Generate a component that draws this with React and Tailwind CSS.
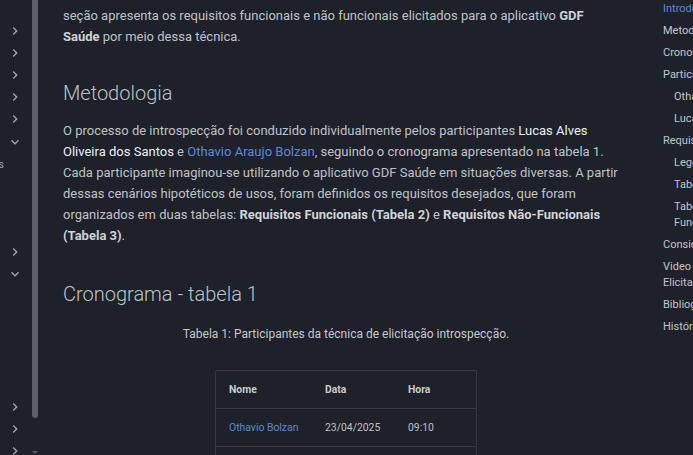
import React from 'react'

// left nav rows: c = chevron ('r' right, 'd' down), t = clipped label, mt = extra offset
const navRows = [
  {}, { c: 'r' }, { c: 'r' }, { c: 'r' }, { c: 'r' }, { c: 'r' },
  { c: 'd', mt: 1 }, { t: 'Requisitos' }, {}, {}, {},
  { c: 'r' }, { c: 'd' }, {}, {}, {}, {}, {},
  { c: 'r', mt: 1 }, { c: 'r' }, { c: 'r' },
]

const tocItems = [
  { lines: ['Introdução'], active: true },
  { lines: ['Metodologia'] },
  { lines: ['Cronograma - tabela 1'] },
  { lines: ['Participantes'] },
  { lines: ['Othavio Araujo Bolzan'], sub: true },
  { lines: ['Lucas Alves Oliveira dos Santos'], sub: true },
  { lines: ['Requisitos'] },
  { lines: ['Legenda'], sub: true },
  { lines: ['Tabela 2: Requisitos Funcionais'], sub: true },
  { lines: ['Tabela 3: Requisitos Não-', 'Funcionais'], sub: true },
  { lines: ['Considerações'] },
  { lines: ['Video de', 'Elicitação'] },
  { lines: ['Bibliografia'] },
  { lines: ['Histórico de versões'] },
]

const rows = [
  { nome: 'Othavio Bolzan', data: '23/04/2025', hora: '09:10' },
  { nome: 'Lucas Alves', data: '23/04/2025', hora: '10:30' },
]

function Chevron({ down }) {
  return (
    <svg viewBox="0 0 24 24" className={`w-4 h-4 fill-[#a3a5ab] ${down ? 'rotate-90' : ''}`}>
      <path d="M8.59 16.58 13.17 12 8.59 7.41 10 6l6 6-6 6z" />
    </svg>
  )
}

function Sidebar() {
  return (
    <aside className="w-[40px] shrink-0 flex">
      <div className="w-[32px] shrink-0 overflow-hidden -mt-[2px]">
        {navRows.map((r, i) => (
          <div
            key={i}
            className={`h-[22px] flex items-center ${r.t ? 'justify-end w-[4px] overflow-hidden' : 'pl-[7px]'} ${r.mt ? 'mt-[1px]' : ''}`}
          >
            {r.c && <Chevron down={r.c === 'd'} />}
            {r.t && <span className="whitespace-nowrap text-[11px] text-[#a3a5ab] pt-[3px]">{r.t}</span>}
          </div>
        ))}
      </div>
      <div className="w-[6px] shrink-0 flex flex-col">
        <div className="h-[418px] bg-[#5c5f68] rounded-b-[3px]" />
        <div className="flex-1 flex items-end justify-center pb-[1px]">
          <div className="w-0 h-0 border-l-[3px] border-r-[3px] border-t-[3px] border-l-transparent border-r-transparent border-t-[#5c5f68]" />
        </div>
      </div>
    </aside>
  )
}

function Toc() {
  return (
    <nav className="flex-1 overflow-hidden text-[11px] leading-[16px] text-[#c3c5ca] pt-[1px]">
      {tocItems.map((it, i) => (
        <div key={i} className={`${i ? 'mt-[6px]' : ''} ${it.sub ? 'pl-[11px]' : ''} whitespace-nowrap ${it.active ? 'text-[#5a8ad8]' : ''}`}>
          {it.lines.map((l, j) => <div key={j}>{l}</div>)}
        </div>
      ))}
    </nav>
  )
}

export default function App() {
  const strong = 'font-bold text-[#d0d2d7]'
  const person = 'text-[#eceef1]'
  const link = 'text-[#5b89d9]'
  return (
    <div className="w-[693px] h-[455px] overflow-hidden bg-[#1e2129] flex font-['Roboto',sans-serif]">
      <Sidebar />

      <main className="w-[623px] shrink-0 pl-[23px] pt-[5px]">
        <div className="w-[566px] text-[13px] leading-[21px] text-[#bfc1c6] whitespace-nowrap">
          <p>
            seção apresenta os requisitos funcionais e não funcionais elicitados para o aplicativo <b className={strong}>GDF</b>
            <br />
            <b className={strong}>Saúde</b> por meio dessa técnica.
          </p>

          <h2 className="mt-[33px] text-[20px] leading-[26px] font-light text-[#bfc1c6]">Metodologia</h2>

          <p className="mt-[14px]">
            O processo de introspecção foi conduzido individualmente pelos participantes <span className={person}>Lucas Alves</span>
            <br />
            <span className={person}>Oliveira dos Santos</span> e <span className={link}>Othavio Araujo Bolzan</span>, seguindo o cronograma apresentado na tabela 1.
            <br />
            Cada participante imaginou-se utilizando o aplicativo GDF Saúde em situações diversas. A partir
            <br />
            dessas cenários hipotéticos de usos, foram definidos os requisitos desejados, que foram
            <br />
            organizados em duas tabelas: <b className={strong}>Requisitos Funcionais (Tabela 2)</b> e <b className={strong}>Requisitos Não-Funcionais</b>
            <br />
            <b className={strong}>(Tabela 3)</b>.
          </p>

          <h2 className="mt-[35px] text-[20px] leading-[26px] font-light text-[#bfc1c6]">Cronograma - tabela 1</h2>

          <p className="mt-[19px] text-center text-[12px] leading-[16px] text-[#c5c7cc]">
            Tabela 1: Participantes da técnica de elicitação introspecção.
          </p>

          <div className="mt-[28px] mx-auto w-[262px] border border-[#363943] rounded-[2px] text-[10.4px]">
            <div className="flex h-[37px] items-center font-bold text-[#c8cad0]">
              <div className="w-[96px] pl-[13px]">Nome</div>
              <div className="w-[83px] pl-[13px]">Data</div>
              <div className="w-[81px] pl-[13px]">Hora</div>
            </div>
            {rows.map((r) => (
              <div key={r.nome} className="flex h-[38px] items-center border-t border-[#363943] text-[#bfc1c6]">
                <div className="w-[96px] pl-[13px] text-[#5b89d9]">{r.nome}</div>
                <div className="w-[83px] pl-[13px]">{r.data}</div>
                <div className="w-[81px] pl-[13px]">{r.hora}</div>
              </div>
            ))}
          </div>
        </div>
      </main>

      <Toc />
    </div>
  )
}
